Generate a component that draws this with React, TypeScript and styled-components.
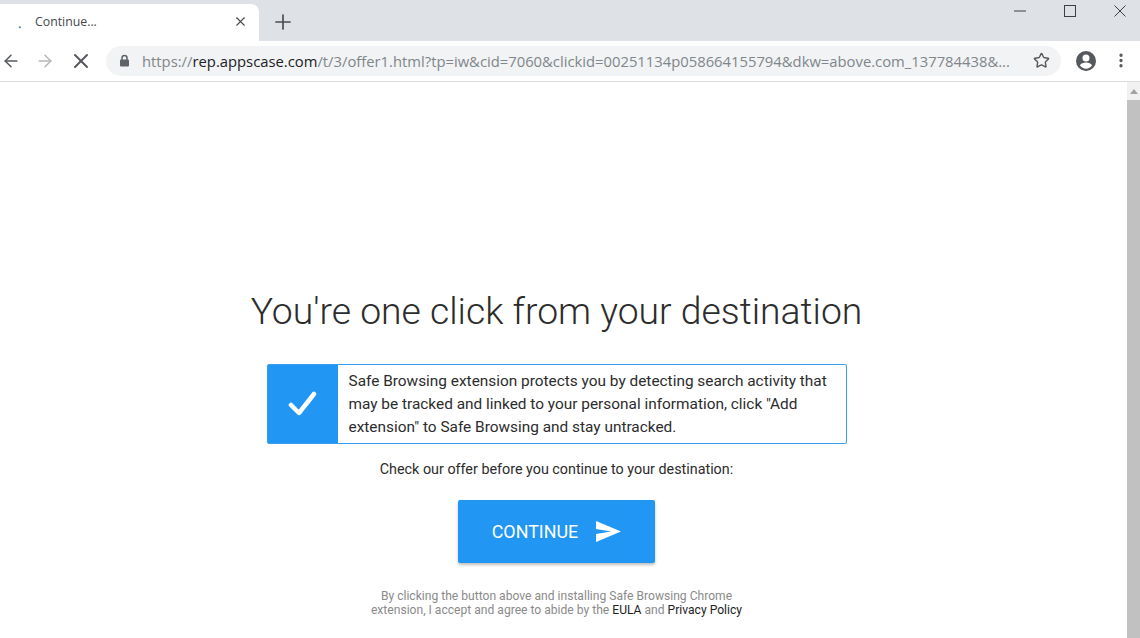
import styled, { createGlobalStyle } from "styled-components"
import { ArrowLeft, ArrowRight, MoreVertical, Plus, Star, X } from "lucide-react"

const GlobalStyle = createGlobalStyle`
  html, body {
    margin: 0;
    height: 100%;
    overflow: hidden;
    background: #fff;
  }
  * { box-sizing: border-box; }
`

export default function App() {
  return (
    <Window>
      <GlobalStyle />
      <TabStrip>
        <Tab>
          <Spinner viewBox="0 0 16 16">
            <path d="M6.500 12.500c.2.600.5 1 1 1.300" fill="none" stroke="#1a73a8" strokeWidth="1.800" />
          </Spinner>
          <TabTitle>Continue...</TabTitle>
          <X size={15} strokeWidth={1.700} color="#45484c" />
        </Tab>
        <NewTab>
          <Plus size={24} strokeWidth={1.700} />
        </NewTab>
        <WindowControls>
          <WinButton>
            <svg width="12" height="12" viewBox="0 0 12 12">
              <path d="M0 6h12" stroke="#3c3f43" strokeWidth="1" />
            </svg>
          </WinButton>
          <WinButton>
            <svg width="12" height="12" viewBox="0 0 12 12">
              <rect x="0.500" y="0.500" width="11" height="11" fill="none" stroke="#3c3f43" />
            </svg>
          </WinButton>
          <WinButton>
            <svg width="12" height="12" viewBox="0 0 12 12">
              <path d="M0.500 0.500l11 11M11.500 0.500l-11 11" stroke="#3c3f43" />
            </svg>
          </WinButton>
        </WindowControls>
      </TabStrip>

      <Toolbar>
        <NavIcons>
          <ArrowLeft size={20} strokeWidth={1.800} color="#55585c" />
          <ArrowRight size={20} strokeWidth={1.800} color="#b4b6b9" />
          <X size={24} strokeWidth={2} color="#55585c" />
        </NavIcons>
        <Omnibox>
          <svg width="13" height="13" viewBox="0 0 13 13">
            <path d="M4 6V4a2.500 2.500 0 0 1 5 0v2" fill="none" stroke="#5f6368" strokeWidth="1.500" />
            <rect x="2" y="5.500" width="9" height="7" rx="1" fill="#5f6368" />
          </svg>
          <Url>
            https://<b>rep.appscase.com</b>/t/3/offer1.html?tp=iw&amp;cid=7060&amp;clickid=00251134p058664155794&amp;dkw=above.com_137784438&amp;...
          </Url>
          <Star size={17} strokeWidth={2} color="#55585c" />
        </Omnibox>
        <Avatar viewBox="0 0 24 24">
          <path
            d="M12 2a10 10 0 1 0 0 20 10 10 0 0 0 0-20zm0 3.500a3.500 3.500 0 1 1 0 7 3.500 3.500 0 0 1 0-7zm0 14.200a7.500 7.500 0 0 1-6-3.100c.1-2 4-3.100 6-3.100s5.900 1.100 6 3.100a7.500 7.500 0 0 1-6 3.100z"
            fill="#55585c"
          />
        </Avatar>
        <MoreVertical size={19} strokeWidth={2.400} color="#55585c" />
      </Toolbar>

      <Viewport>
        <Page>
          <Heading>You're one click from your destination</Heading>
          <Notice>
            <CheckPanel>
              <svg width="30" height="28" viewBox="0 0 30 28">
                <path d="M3 15l8 8L26 4" fill="none" stroke="#fff" strokeWidth="4.500" strokeLinecap="round" strokeLinejoin="round" />
              </svg>
            </CheckPanel>
            <NoticeText>
              Safe Browsing extension protects you by detecting search activity that may be tracked and linked to your personal information, click "Add extension" to Safe Browsing and stay untracked.
            </NoticeText>
          </Notice>
          <Offer>Check our offer before you continue to your destination:</Offer>
          <ContinueButton>
            CONTINUE
            <svg width="25" height="21" viewBox="0 0 25 21">
              <path d="M0 0l25 10.500L0 21v-8l15-2.500L0 8z" fill="#fff" />
            </svg>
          </ContinueButton>
          <Legal>
            By clicking the button above and installing Safe Browsing Chrome
            <br />
            extension, I accept and agree to abide by the <LegalLink>EULA</LegalLink> and <LegalLink>Privacy Policy</LegalLink>
          </Legal>
        </Page>
        <Scrollbar>
          <ScrollArrow />
          <ScrollThumb />
        </Scrollbar>
      </Viewport>
    </Window>
  )
}

const Window = styled.div`
  width: 1140px;
  height: 638px;
  display: flex;
  flex-direction: column;
  overflow: hidden;
`

const TabStrip = styled.div`
  height: 41px;
  flex: none;
  display: flex;
  align-items: flex-end;
  background: #dee1e6;
`

const Tab = styled.div`
  width: 259px;
  height: 37px;
  display: flex;
  align-items: center;
  padding: 0 11px 2px 13px;
  background: #fff;
  border-radius: 0 8px 0 0;
`

const Spinner = styled.svg`
  width: 16px;
  height: 16px;
  flex: none;
`

const TabTitle = styled.span`
  flex: 1;
  margin-left: 6px;
  font: 12.300px "Open Sans", sans-serif;
  color: #45484c;
`

const NewTab = styled.div`
  width: 48px;
  height: 37px;
  display: flex;
  align-items: center;
  justify-content: center;
  padding-bottom: 2px;
  color: #4a4d51;
`

const WindowControls = styled.div`
  margin-left: auto;
  align-self: flex-start;
  display: flex;
  gap: 10px;
  padding-top: 5px;
`

const WinButton = styled.div`
  width: 40px;
  height: 12px;
  display: flex;
  align-items: center;
  justify-content: center;
`

const Toolbar = styled.div`
  height: 41px;
  flex: none;
  display: flex;
  align-items: center;
  background: #fff;
  border-bottom: 1px solid #dadce0;
  padding: 0 10px 1px 1px;
`

const NavIcons = styled.div`
  width: 105px;
  flex: none;
  display: flex;
  align-items: center;
  gap: 14px;
`

const Omnibox = styled.div`
  width: 955px;
  height: 30px;
  flex: none;
  display: flex;
  align-items: center;
  padding: 0 11px 0 12px;
  background: #f1f3f4;
  border-radius: 15px;
`

const Url = styled.span`
  flex: 1;
  margin-left: 11px;
  white-space: nowrap;
  overflow: hidden;
  font: 14.800px "Open Sans", sans-serif;
  color: #80868b;

  b {
    font-weight: 400;
    color: #202124;
  }
`

const Avatar = styled.svg`
  width: 24px;
  height: 24px;
  flex: none;
  margin: 0 14px 0 13px;
`

const Viewport = styled.div`
  flex: 1;
  display: flex;
  min-height: 0;
`

const Page = styled.main`
  flex: 1;
  display: flex;
  flex-direction: column;
  align-items: center;
  padding: 206px 14px 0 0;
  font-family: Roboto, "Liberation Sans", sans-serif;
`

const Heading = styled.h1`
  margin: 0;
  font-size: 37.300px;
  line-height: 46px;
  font-weight: 300;
  white-space: nowrap;
  color: #2c2c2c;
`

const Notice = styled.div`
  width: 580px;
  height: 80px;
  margin-top: 30px;
  display: flex;
  border: 1px solid #3a9ff0;
  border-radius: 2px;
`

const CheckPanel = styled.div`
  width: 70px;
  flex: none;
  display: flex;
  align-items: center;
  justify-content: center;
  background: #2196f3;
`

const NoticeText = styled.p`
  margin: 0;
  padding: 5px 10px 0 11px;
  font-size: 15.400px;
  line-height: 23px;
  color: #2c2c2c;
`

const Offer = styled.p`
  margin: 16px 0 0;
  font-size: 14.340px;
  line-height: 20px;
  color: #2c2c2c;
`

const ContinueButton = styled.button`
  width: 197px;
  height: 63px;
  margin-top: 20px;
  display: flex;
  align-items: center;
  justify-content: center;
  gap: 18px;
  border: 0;
  border-radius: 2px;
  background: #2196f3;
  box-shadow: 0 2px 3px rgba(0, 0, 0, 0.25);
  color: #fff;
  font: 400 17.900px Roboto, sans-serif;
`

const Legal = styled.p`
  margin: 26px 0 0;
  text-align: center;
  font-size: 12.100px;
  line-height: 14px;
  color: #8a8a8a;
`

const LegalLink = styled.span`
  color: #222;
`

const Scrollbar = styled.div`
  width: 13px;
  flex: none;
  display: flex;
  flex-direction: column;
  background: #f1f1f1;
`

const ScrollArrow = styled.div`
  height: 18px;
  flex: none;
  display: flex;
  align-items: center;
  justify-content: center;

  &::before {
    content: "";
    border-left: 4px solid transparent;
    border-right: 4px solid transparent;
    border-bottom: 5px solid #a3a3a3;
  }
`

const ScrollThumb = styled.div`
  flex: 1;
  background: #c1c1c1;
`
